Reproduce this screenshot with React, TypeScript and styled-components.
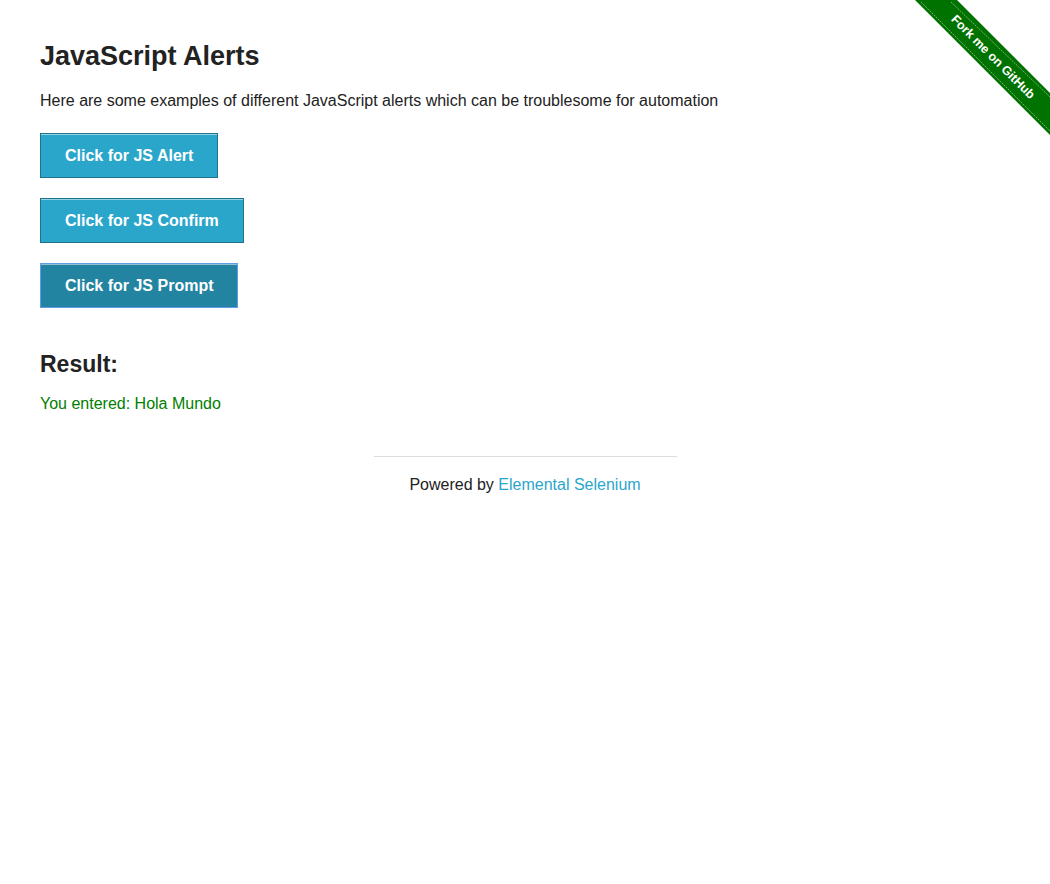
import * as React from 'react';
import styled, { createGlobalStyle } from 'styled-components';

const GlobalStyle = createGlobalStyle`
  html, body {
    margin: 0;
    padding: 0;
    background: #fff;
  }
  body {
    color: #222;
    font-family: "Liberation Sans", Helvetica, Arial, sans-serif;
    font-size: 16px;
  }
`;

const Row = styled.div`
  margin: 0 auto;
  max-width: 1000px;
`;

const Content = styled.div`
  padding: 38px 15px 0;
`;

const Title = styled.h3`
  font-size: 27px;
  font-weight: bold;
  line-height: 1.4;
  margin: 0 0 12px;
`;

const Text = styled.p<{ color?: string }>`
  color: ${({ color }) => color || '#222'};
  font-size: 16px;
  line-height: 1.6;
  margin: 0;
`;

const ButtonList = styled.div`
  align-items: flex-start;
  display: flex;
  flex-direction: column;
  gap: 20px;
  margin-top: 20px;
`;

const Button = styled.button<{ focused?: boolean }>`
  background-color: ${({ focused }) => (focused ? '#2284a1' : '#2ba6cb')};
  border: 1px solid ${({ focused }) => (focused ? '#5f9be6' : '#1e728c')};
  box-shadow: inset 0 1px 0 rgba(255, 255, 255, 0.5);
  color: #fff;
  cursor: pointer;
  font-family: "Liberation Sans", Helvetica, Arial, sans-serif;
  font-size: 16px;
  font-weight: bold;
  height: 45px;
  line-height: 18px;
  padding: 13px 24px 12px;
`;

const ResultTitle = styled.h4`
  font-size: 23px;
  font-weight: bold;
  line-height: 1.4;
  margin: 40px 0 10px;
`;

const Footer = styled.div`
  margin: 40px auto 0;
  width: 303px;
`;

const Rule = styled.hr`
  border: 0;
  border-top: 1px solid #ddd;
  margin: 0 0 15px;
`;

const FooterText = styled.div`
  font-size: 16px;
  line-height: 1.6;
  text-align: center;
`;

const Link = styled.a`
  color: #2ba6cb;
  text-decoration: none;
`;

const Ribbon = styled.svg`
  position: absolute;
  right: 0;
  top: 0;
`;

const ForkRibbon = () => (
  <Ribbon width="150" height="150" viewBox="0 0 150 150">
    <polygon points="15,0 57,0 150,93 150,135" fill="#007200" />
    <line x1="21" y1="2" x2="150" y2="131" stroke="#fff" strokeOpacity="0.45" strokeWidth="1" strokeDasharray="2 1" />
    <line x1="51" y1="2" x2="150" y2="97" stroke="#fff" strokeOpacity="0.45" strokeWidth="1" strokeDasharray="2 1" />
    <text
      x="93"
      y="57"
      transform="rotate(45 93 57)"
      textAnchor="middle"
      dominantBaseline="central"
      fill="#fff"
      fontFamily="'Liberation Sans', Arial, sans-serif"
      fontWeight="bold"
      fontSize="12.5"
    >
      Fork me on GitHub
    </text>
  </Ribbon>
);

export default function App() {
  return (
    <>
      <GlobalStyle />
      <ForkRibbon />
      <Row>
        <Content>
          <Title>JavaScript Alerts</Title>
          <Text>Here are some examples of different JavaScript alerts which can be troublesome for automation</Text>
          <ButtonList>
            <Button>Click for JS Alert</Button>
            <Button>Click for JS Confirm</Button>
            <Button focused>Click for JS Prompt</Button>
          </ButtonList>
          <ResultTitle>Result:</ResultTitle>
          <Text color="green">You entered: Hola Mundo</Text>
        </Content>
        <Footer>
          <Rule />
          <FooterText>
            Powered by <Link href="#">Elemental Selenium</Link>
          </FooterText>
        </Footer>
      </Row>
    </>
  );
}
